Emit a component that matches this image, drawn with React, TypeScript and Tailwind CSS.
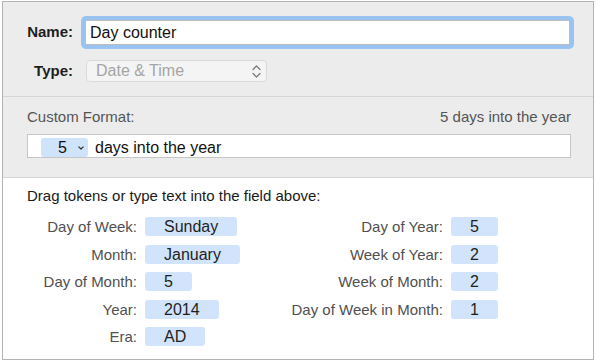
const leftRows = [
  { label: "Day of Week:", value: "Sunday" },
  { label: "Month:", value: "January" },
  { label: "Day of Month:", value: "5" },
  { label: "Year:", value: "2014" },
  { label: "Era:", value: "AD" },
];

const rightRows = [
  { label: "Day of Year:", value: "5" },
  { label: "Week of Year:", value: "2" },
  { label: "Week of Month:", value: "2" },
  { label: "Day of Week in Month:", value: "1" },
];

function Token({ value }: { value: string }) {
  return (
    <span className="ml-[8px] h-[19px] px-[19px] rounded-[3px] bg-[#d1e4fb] text-[16px] leading-[19px] text-[#1f1f1f]">
      {value}
    </span>
  );
}

function TokenRow({ label, value, labelWidth }: { label: string; value: string; labelWidth: string }) {
  return (
    <div className="flex items-center h-[19px]">
      <span className={`${labelWidth} text-right text-[15px] leading-[19px] text-[#505050] whitespace-nowrap`}>
        {label}
      </span>
      <Token value={value} />
    </div>
  );
}

export default function App() {
  return (
    <div className="w-[596px] h-[362px] bg-white pl-[2px] pt-[1px] font-['Liberation_Sans',Arial,sans-serif]">
      <div className="w-[592px] h-[359px] border border-[#b3b3b3] flex flex-col">
        {/* name + type */}
        <div className="h-[95px] bg-[#ececec] border-b border-[#d6d6d6] pt-[14px]">
          <div className="flex items-center">
            <span className="w-[70px] text-right text-[15px] font-bold text-[#1e1e1e]">Name:</span>
            <div className="ml-[8px] w-[493px] h-[33px] rounded-[5px] bg-[#99c3f1] p-[4px]">
              <div className="h-full bg-white border border-[#bdbdbd] pl-[4px] pt-[1px] flex items-center text-[16px] text-[#111]">
                Day counter
              </div>
            </div>
          </div>
          <div className="flex items-center mt-[11px]">
            <span className="w-[70px] text-right text-[15px] font-bold text-[#1e1e1e]">Type:</span>
            <div className="ml-[13px] w-[181px] h-[22px] rounded-[4px] bg-[#f4f4f4] border border-[#dadada] flex items-center justify-between pl-[9px] pr-[5px] text-[16px] text-[#a5a5a5]">
              <span>Date &amp; Time</span>
              <svg width="9" height="15" viewBox="0 0 9 15" fill="none" stroke="#7d7d7d" strokeWidth="1.3" strokeLinecap="round" strokeLinejoin="round">
                <path d="M1 5.5 L4.5 2 L8 5.5" />
                <path d="M1 9.5 L4.5 13 L8 9.5" />
              </svg>
            </div>
          </div>
        </div>

        {/* custom format */}
        <div className="h-[81px] bg-[#ececec] border-b border-[#d6d6d6] pl-[24px] pr-[22px] pt-[11px]">
          <div className="flex justify-between text-[15px] leading-[18px] text-[#555]">
            <span>Custom Format:</span>
            <span>5 days into the year</span>
          </div>
          <div className="mt-[8px] h-[24px] border border-[#c6c6c6] bg-white flex items-end pl-[13px] text-[16px] leading-[19px] text-[#111]">
            <span className="h-[19px] w-[47px] rounded-[3px] bg-[#cfe3fb] flex items-center pl-[17px]">
              5
              <svg className="ml-[11px]" width="6" height="4" viewBox="0 0 6 4" fill="none" stroke="#333" strokeWidth="1.2" strokeLinecap="round" strokeLinejoin="round">
                <path d="M0.8 0.8 L3 3 L5.2 0.8" />
              </svg>
            </span>
            <span className="ml-[7px] h-[19px]">days into the year</span>
          </div>
        </div>

        {/* tokens */}
        <div className="flex-1 bg-white pl-[24px] pt-[9px]">
          <p className="text-[15px] leading-[18px] text-[#1a1a1a]">Drag tokens or type text into the field above:</p>
          <div className="mt-[12px] flex">
            <div className="w-[256px] flex flex-col gap-[8.5px]">
              {leftRows.map((r) => (
                <TokenRow key={r.label} label={r.label} value={r.value} labelWidth="w-[110px]" />
              ))}
            </div>
            <div className="flex flex-col gap-[8.5px]">
              {rightRows.map((r) => (
                <TokenRow key={r.label} label={r.label} value={r.value} labelWidth="w-[160px]" />
              ))}
            </div>
          </div>
        </div>
      </div>
    </div>
  );
}
